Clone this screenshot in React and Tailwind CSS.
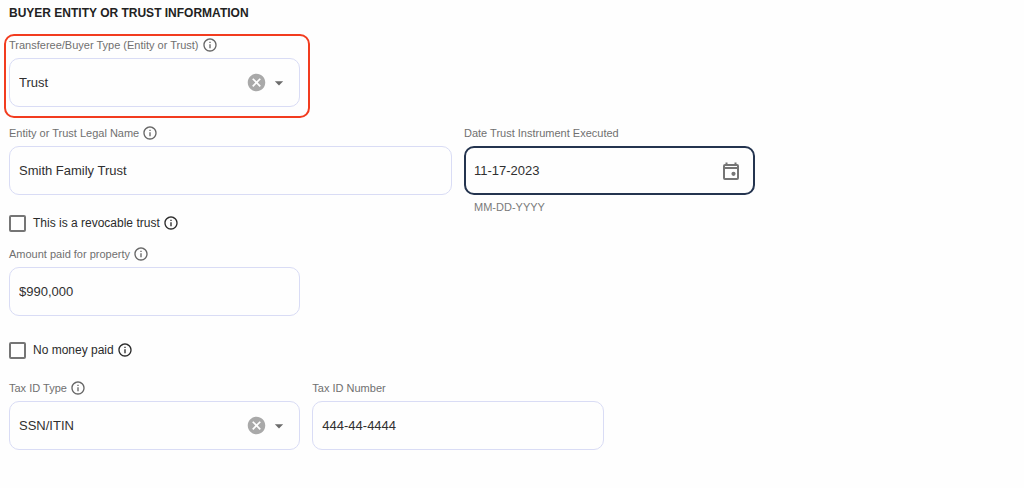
import { useState } from 'react';
import { MdArrowDropDown, MdCancel, MdOutlineInfo } from 'react-icons/md';
import clsx from 'clsx';

const boxClass =
  'block h-[49px] w-full rounded-[10px] bg-transparent text-[13px] text-[#303030] outline-none';

function InfoButton({ label, dark }) {
  return (
    <button
      type="button"
      aria-label={`About ${label}`}
      className={clsx('shrink-0', dark ? 'text-[#2b2b2b]' : 'text-[#666666]')}
    >
      <MdOutlineInfo className="size-4" />
    </button>
  );
}

function Field({ id, label, info, className, children }) {
  return (
    <div className={className}>
      <div className="mb-[3px] flex h-5 items-center gap-[3px]">
        <label htmlFor={id} className="text-[11px] whitespace-nowrap text-[#707070]">{label}</label>
        {info && <InfoButton label={label} />}
      </div>
      {children}
    </div>
  );
}

function TextInput({ id, value, onChange }) {
  return (
    <input
      id={id}
      type="text"
      value={value}
      onChange={(e) => onChange(e.target.value)}
      className={`${boxClass} border border-[#d9dcf5] px-[9px]`}
    />
  );
}

function SelectInput({ id, value, options, onChange }) {
  return (
    <div className="relative">
      <select
        id={id}
        value={value}
        onChange={(e) => onChange(e.target.value)}
        className={`${boxClass} appearance-none border border-[#d9dcf5] px-[9px]`}
      >
        <option value="" />
        {options.map((o) => <option key={o} value={o}>{o}</option>)}
      </select>
      <div className="pointer-events-none absolute inset-y-0 right-[11px] flex items-center gap-0.5">
        <button
          type="button"
          aria-label="Clear"
          onClick={() => onChange('')}
          className="pointer-events-auto text-[#a9a9a9]"
        >
          <MdCancel className="size-[21px]" />
        </button>
        <MdArrowDropDown className="size-5 text-[#6b6b6b]" />
      </div>
    </div>
  );
}

function CheckRow({ id, label, checked, onChange, className }) {
  return (
    <div className={clsx('flex h-5 items-center', className)}>
      <input
        id={id}
        type="checkbox"
        checked={checked}
        onChange={(e) => onChange(e.target.checked)}
        className="size-[17px] appearance-none rounded-[2px] border-2 border-[#757575] checked:bg-[#24344f]"
      />
      <label htmlFor={id} className="mr-[3px] ml-[7px] text-xs text-[#2b2b2b]">{label}</label>
      <InfoButton label={label} dark />
    </div>
  );
}

export default function App() {
  const [form, setForm] = useState({
    type: 'Trust',
    name: 'Smith Family Trust',
    date: '11-17-2023',
    revocable: false,
    amount: '$990,000',
    noMoney: false,
    taxType: 'SSN/ITIN',
    taxId: '444-44-4444',
  });

  const set = (key) => (value) => setForm((f) => ({ ...f, [key]: value }));

  return (
    <main className="min-h-screen bg-[#fefefe] pt-[3px] pr-[117px] pl-[9px] font-['Liberation_Sans',sans-serif]">
      <h1 className="mb-3 text-xs leading-5 font-bold text-[#222222]">BUYER ENTITY OR TRUST INFORMATION</h1>

      <form onSubmit={(e) => e.preventDefault()}>
        <div className="grid grid-cols-12 gap-x-3">
          <div className="relative col-span-4">
            <Field id="type" label="Transferee/Buyer Type (Entity or Trust)" info>
              <SelectInput id="type" value={form.type} options={['Entity', 'Trust']} onChange={set('type')} />
            </Field>
            {/* Highlight frame */}
            <div className="pointer-events-none absolute -top-px -right-2.5 -bottom-[11px] -left-[5px] rounded-[10px] border-2 border-[#f23c1f]" />
          </div>
        </div>

        <div className="mt-4 grid grid-cols-12 gap-x-3">
          <div className="col-span-6">
            <Field id="name" label="Entity or Trust Legal Name" info>
              <TextInput id="name" value={form.name} onChange={set('name')} />
            </Field>
            <CheckRow
              id="revocable"
              label="This is a revocable trust"
              checked={form.revocable}
              onChange={set('revocable')}
              className="mt-[18px]"
            />
          </div>
          <Field id="date" label="Date Trust Instrument Executed" className="col-span-4">
            <div className="relative">
              <input
                id="date"
                type="text"
                value={form.date}
                onChange={(e) => set('date')(e.target.value)}
                aria-describedby="date-format"
                className={`${boxClass} border-2 border-[#24344f] px-2`}
              />
              <button
                type="button"
                aria-label="Open calendar"
                className="absolute inset-y-0 right-3.5 text-[#757575]"
              >
                <svg viewBox="0 0 20 20" className="size-5">
                  <rect x="3" y="4" width="14" height="14" rx="1" fill="none" stroke="currentColor" strokeWidth="2" />
                  <path d="M5.5 1.5v2.5M14.5 1.5v2.5M3 7h14" stroke="currentColor" strokeWidth="2" />
                  <circle cx="12.5" cy="12.8" r="2.1" fill="currentColor" />
                </svg>
              </button>
            </div>
            <p id="date-format" className="mt-0.5 ml-2.5 text-[11px] leading-5 text-[#7a7a7a]">MM-DD-YYYY</p>
          </Field>
        </div>

        <div className="mt-[11px] grid grid-cols-12 gap-x-3">
          <Field id="amount" label="Amount paid for property" info className="col-span-4">
            <TextInput id="amount" value={form.amount} onChange={set('amount')} />
          </Field>
        </div>

        <CheckRow
          id="no-money"
          label="No money paid"
          checked={form.noMoney}
          onChange={set('noMoney')}
          className="mt-6"
        />

        <div className="mt-[18px] grid grid-cols-12 gap-x-3">
          <Field id="tax-type" label="Tax ID Type" info className="col-span-4">
            <SelectInput id="tax-type" value={form.taxType} options={['SSN/ITIN', 'EIN']} onChange={set('taxType')} />
          </Field>
          <Field id="tax-id" label="Tax ID Number" className="col-span-4">
            <TextInput id="tax-id" value={form.taxId} onChange={set('taxId')} />
          </Field>
        </div>
      </form>
    </main>
  );
}
